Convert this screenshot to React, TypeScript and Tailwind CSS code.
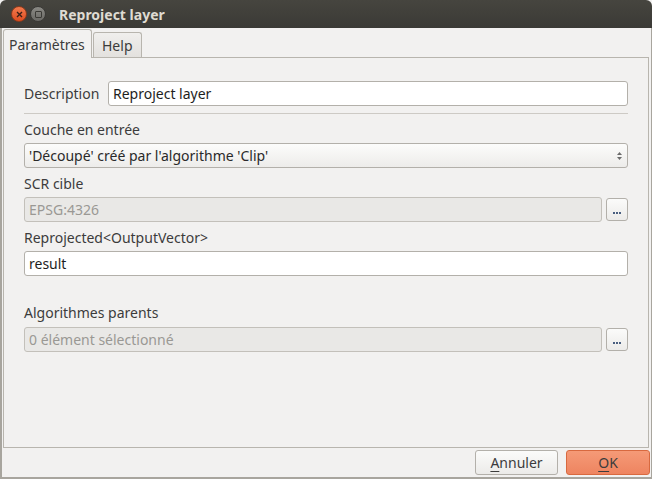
import React from "react";

const font = { fontFamily: '"Noto Sans", "DejaVu Sans", sans-serif' };

function Dots() {
  return (
    <button className="w-[22px] h-[23px] shrink-0 rounded-[3px] border border-[#b3b0aa] bg-gradient-to-b from-[#fbfbfa] to-[#ecebe9] flex items-end justify-center pb-[6px]">
      <span className="flex gap-[1px]">
        <span className="w-[2px] h-[2px] bg-[#4a5f80]" />
        <span className="w-[2px] h-[2px] bg-[#4a5f80]" />
        <span className="w-[2px] h-[2px] bg-[#4a5f80]" />
      </span>
    </button>
  );
}

export default function App() {
  return (
    <div
      className="w-[652px] h-[479px] bg-[#f2f1f0] flex flex-col text-[14px] text-[#3c3c3c] overflow-hidden"
      style={font}
    >
      {/* Title bar */}
      <div className="h-[28px] shrink-0 rounded-t-[6px] bg-gradient-to-b from-[#46453f] to-[#3b3a36] flex items-center pl-[11px]">
        <div className="w-[16px] h-[16px] rounded-full bg-gradient-to-b from-[#f37a4d] to-[#dd4c1f] border border-[#8d3a1b] flex items-center justify-center">
          <svg width="7" height="7" viewBox="0 0 7 7">
            <path d="M1 1L6 6M6 1L1 6" stroke="#3a2018" strokeWidth="1.4" />
          </svg>
        </div>
        <div className="ml-[3px] w-[16px] h-[16px] rounded-full bg-gradient-to-b from-[#8a8984] to-[#6a6965] border border-[#3a3936] flex items-center justify-center">
          <div className="w-[7px] h-[7px] border-[1.5px] border-[#3b3a36] rounded-[1px]" />
        </div>
        <div className="ml-[13px] font-bold text-[14px] text-[#dfdbd2]">Reproject layer</div>
      </div>

      {/* Body */}
      <div className="flex-1 flex flex-col border-l-2 border-r border-b-2 border-[#a8a59e] pl-[1px] pr-[1px]">
        {/* Tabs */}
        <div className="h-[29px] flex items-end pt-[1px] relative z-10">
          <div className="px-[5px] border border-b-0 border-[#b8b5ae] rounded-t-[3px] bg-[#f2f1f0] flex items-center text-[14px] text-[#3c3c3c] w-[89px] mb-[-1px] h-[29px]">
            Paramètres
          </div>
          <div className="h-[25px] ml-[1px] px-[8px] border border-b-0 border-[#b8b5ae] rounded-t-[3px] bg-gradient-to-b from-[#f0efed] to-[#e3e1de] flex items-center text-[14px] text-[#3c3c3c]">
            Help
          </div>
        </div>
        {/* Pane */}
        <div className="h-[391px] border border-[#b8b5ae] mr-[1px] px-[20px] pt-[23px] flex flex-col">
          <div className="flex items-center gap-[4px] h-[25px]">
            <span className="shrink-0 w-[80px]">Description</span>
            <div className="flex-1 h-[25px] bg-white border border-[#b3b0aa] rounded-[3px] flex items-center px-[4px] text-[#1e1e1e]">
              Reproject layer
            </div>
          </div>
          <div className="h-px bg-[#cdcac5] mt-[7px]" />
          <div className="mt-[5px] h-[20px] flex items-center">Couche en entrée</div>
          <div className="mt-[4px] h-[25px] border border-[#b3b0aa] rounded-[3px] bg-gradient-to-b from-[#fcfcfb] to-[#edecea] flex items-center pl-[4px] pr-[4px] text-[#2a2a2a]">
            <span className="flex-1">'Découpé' créé par l'algorithme 'Clip'</span>
            <svg width="7" height="12" viewBox="0 0 7 12">
              <path d="M3.5 2L6 5H1Z" fill="#6b6b6b" />
              <path d="M3.5 10L6 7H1Z" fill="#6b6b6b" />
            </svg>
          </div>
          <div className="mt-[5px] h-[20px] flex items-center">SCR cible</div>
          <div className="mt-[4px] flex items-center gap-[4px]">
            <div className="flex-1 h-[25px] border border-[#c3c0ba] rounded-[3px] bg-[#e9e8e6] flex items-center px-[4px] text-[#9a9894]">
              EPSG:4326
            </div>
            <Dots />
          </div>
          <div className="mt-[5px] h-[20px] flex items-center">Reprojected&lt;OutputVector&gt;</div>
          <div className="mt-[4px] h-[25px] bg-white border border-[#b3b0aa] rounded-[3px] flex items-center px-[4px] text-[#1e1e1e]">
            result
          </div>
          <div className="mt-[26px] h-[20px] flex items-center">Algorithmes parents</div>
          <div className="mt-[5px] flex items-center gap-[4px]">
            <div className="flex-1 h-[25px] border border-[#c3c0ba] rounded-[3px] bg-[#e9e8e6] flex items-center px-[4px] text-[#9a9894]">
              0 élément sélectionné
            </div>
            <Dots />
          </div>
        </div>
        {/* Buttons */}
        <div className="flex-1 flex items-center justify-end gap-[8px]">
          <button className="w-[83px] h-[25px] rounded-[3px] border border-[#b3b0aa] bg-gradient-to-b from-[#fbfbfa] to-[#ecebe9] text-[14px] text-[#3c3c3c]">
            <span className="underline underline-offset-[3px] decoration-[#3c3c3c]">A</span>nnuler
          </button>
          <button className="w-[84px] h-[25px] rounded-[3px] border border-[#d8693f] bg-gradient-to-b from-[#f59a77] to-[#ee8460] text-[14px] text-[#3c3c3c]">
            <span className="underline underline-offset-[3px]">O</span>K
          </button>
        </div>
      </div>
    </div>
  );
}
